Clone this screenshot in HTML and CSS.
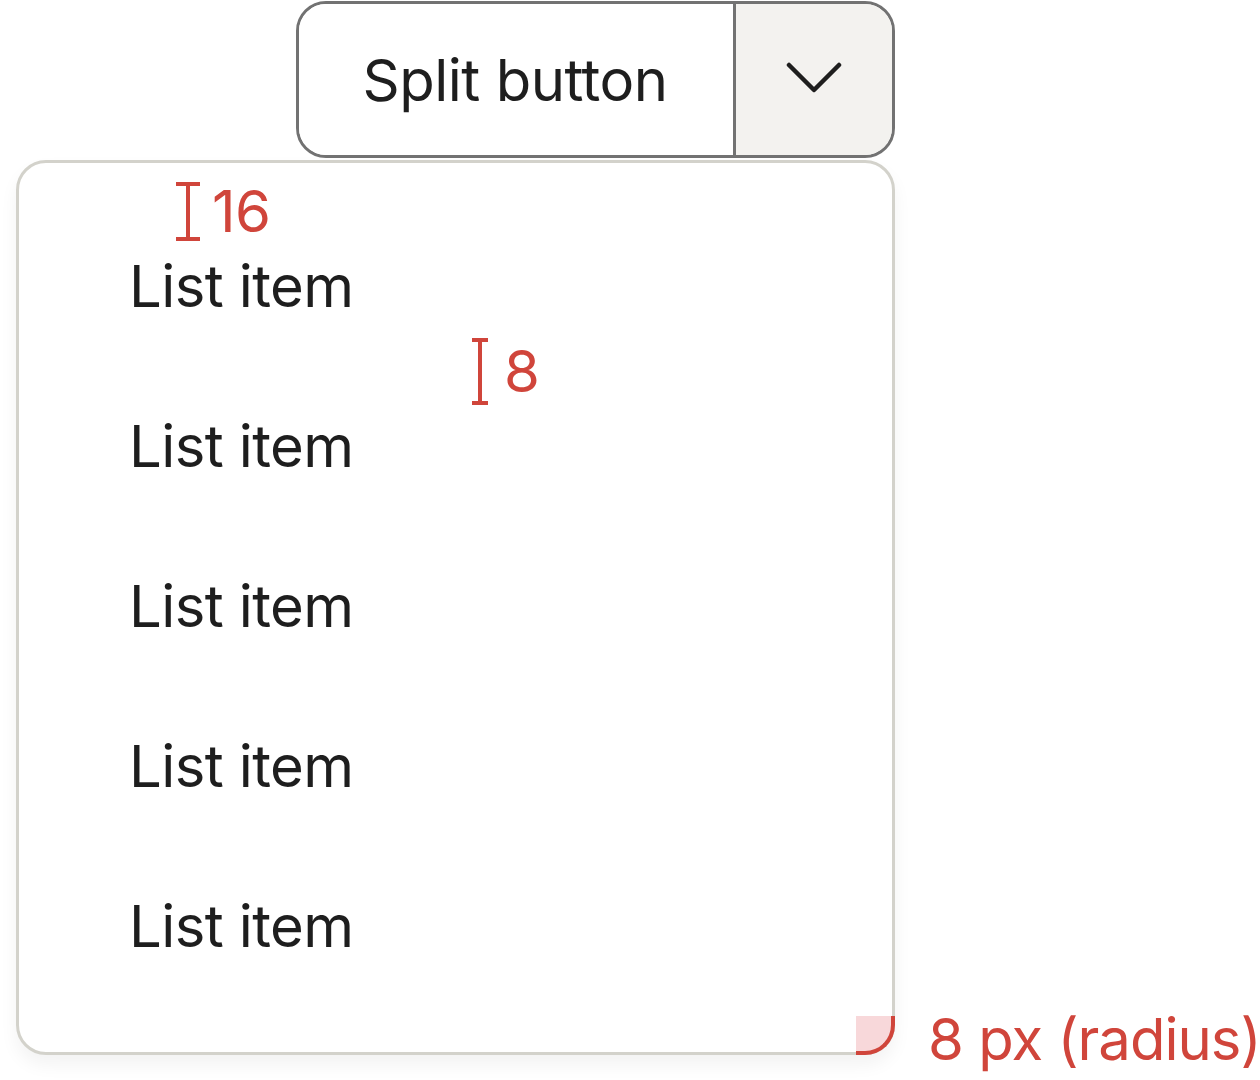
FILE: index.html
```html
<!DOCTYPE html>
<html lang="en">
<head>
    <meta charset="UTF-8">
    <title>Split button menu</title>
    <link rel="stylesheet" href="styles.css">
</head>
<body>
    <div class="menu-demo">
        <div class="split-button">
            <button class="split-main">Split button</button>
            <button class="split-toggle" aria-label="Open menu">
                <svg width="56" height="32" viewBox="0 0 56 32">
                    <path d="M3 3 L28 28 L53 3" fill="none" stroke="#1e1e1e" stroke-width="4.5" stroke-linecap="round" stroke-linejoin="round"/>
                </svg>
            </button>
        </div>

        <div class="dropdown">
            <ul class="menu-list">
                <li class="menu-item">List item</li>
                <li class="menu-item">List item</li>
                <li class="menu-item">List item</li>
                <li class="menu-item">List item</li>
                <li class="menu-item">List item</li>
            </ul>

            <!-- spacing annotations -->
            <svg class="measure measure-16" width="24" height="59" viewBox="0 0 24 59">
                <path d="M0 2 H24 M12 2 V57 M0 57 H24" fill="none" stroke="#d0453b" stroke-width="4"/>
            </svg>
            <span class="note note-16">16</span>
            <svg class="measure measure-8" width="16" height="67" viewBox="0 0 16 67">
                <path d="M0 2 H16 M8 2 V65 M0 65 H16" fill="none" stroke="#d0453b" stroke-width="4"/>
            </svg>
            <span class="note note-8">8</span>
            <div class="radius-mark"></div>
            <span class="note note-radius">8 px (radius)</span>
        </div>
    </div>
</body>
</html>
```

FILE: styles.css
```css
html {
    overflow: hidden;
}
body {
    margin: 0;
    min-height: 1080px;
    background: #fff;
    font-family: Inter, "Noto Sans", sans-serif;
    color: #1e1e1e;
}
.menu-demo {
    width: 879px;
    padding: 1px 0 0 16px;
    display: flex;
    flex-direction: column;
    align-items: flex-end;
    gap: 2px;
}

/* --- split button --- */
.split-button {
    display: flex;
    height: 157px;
    box-sizing: border-box;
    border: 3px solid #727272;
    border-radius: 30px;
    overflow: hidden;
}
.split-button button {
    font-family: inherit;
    border: none;
    margin: 0;
    cursor: pointer;
}
.split-main {
    width: 434px;
    background: #fff;
    color: #1e1e1e;
    font-size: 58px;
    letter-spacing: -0.5px;
    padding: 0 2px 0 0;
    text-align: center;
}
.split-toggle {
    width: 159px;
    background: #f3f2ef;
    border-left: 3px solid #727272 !important;
    display: flex;
    align-items: center;
    justify-content: center;
    padding: 0 0 3px 0;
}

/* --- dropdown --- */
.dropdown {
    position: relative;
    width: 879px;
    height: 895px;
    box-sizing: border-box;
    border: 3px solid #d3d2cb;
    border-radius: 30px;
    background: #fff;
    box-shadow: 0 10px 18px rgba(0, 0, 0, 0.05);
}
.menu-list {
    list-style: none;
    margin: 0;
    padding: 43px 0 0 0;
}
.menu-item {
    font-size: 58px;
    letter-spacing: -0.6px;
    line-height: 80px;
    padding: 40px 0 40px 110px;
}

/* --- annotations --- */
.measure {
    position: absolute;
}
.measure-16 { left: 157px; top: 19px; }
.measure-8 { left: 453px; top: 175px; }
.note {
    position: absolute;
    font-size: 58px;
    line-height: 58px;
    letter-spacing: -0.7px;
    color: #d0453b;
    white-space: nowrap;
}
.note-16 { left: 193px; top: 19px; }
.note-8 { left: 485px; top: 179px; }
.note-radius { left: 909px; top: 847px; letter-spacing: -1px; }
.radius-mark {
    position: absolute;
    right: -3px;
    bottom: -3px;
    width: 35px;
    height: 35px;
    background: #f8d8da;
    border-right: 4px solid #d0453b;
    border-bottom: 4px solid #d0453b;
    border-bottom-right-radius: 30px;
}
```
